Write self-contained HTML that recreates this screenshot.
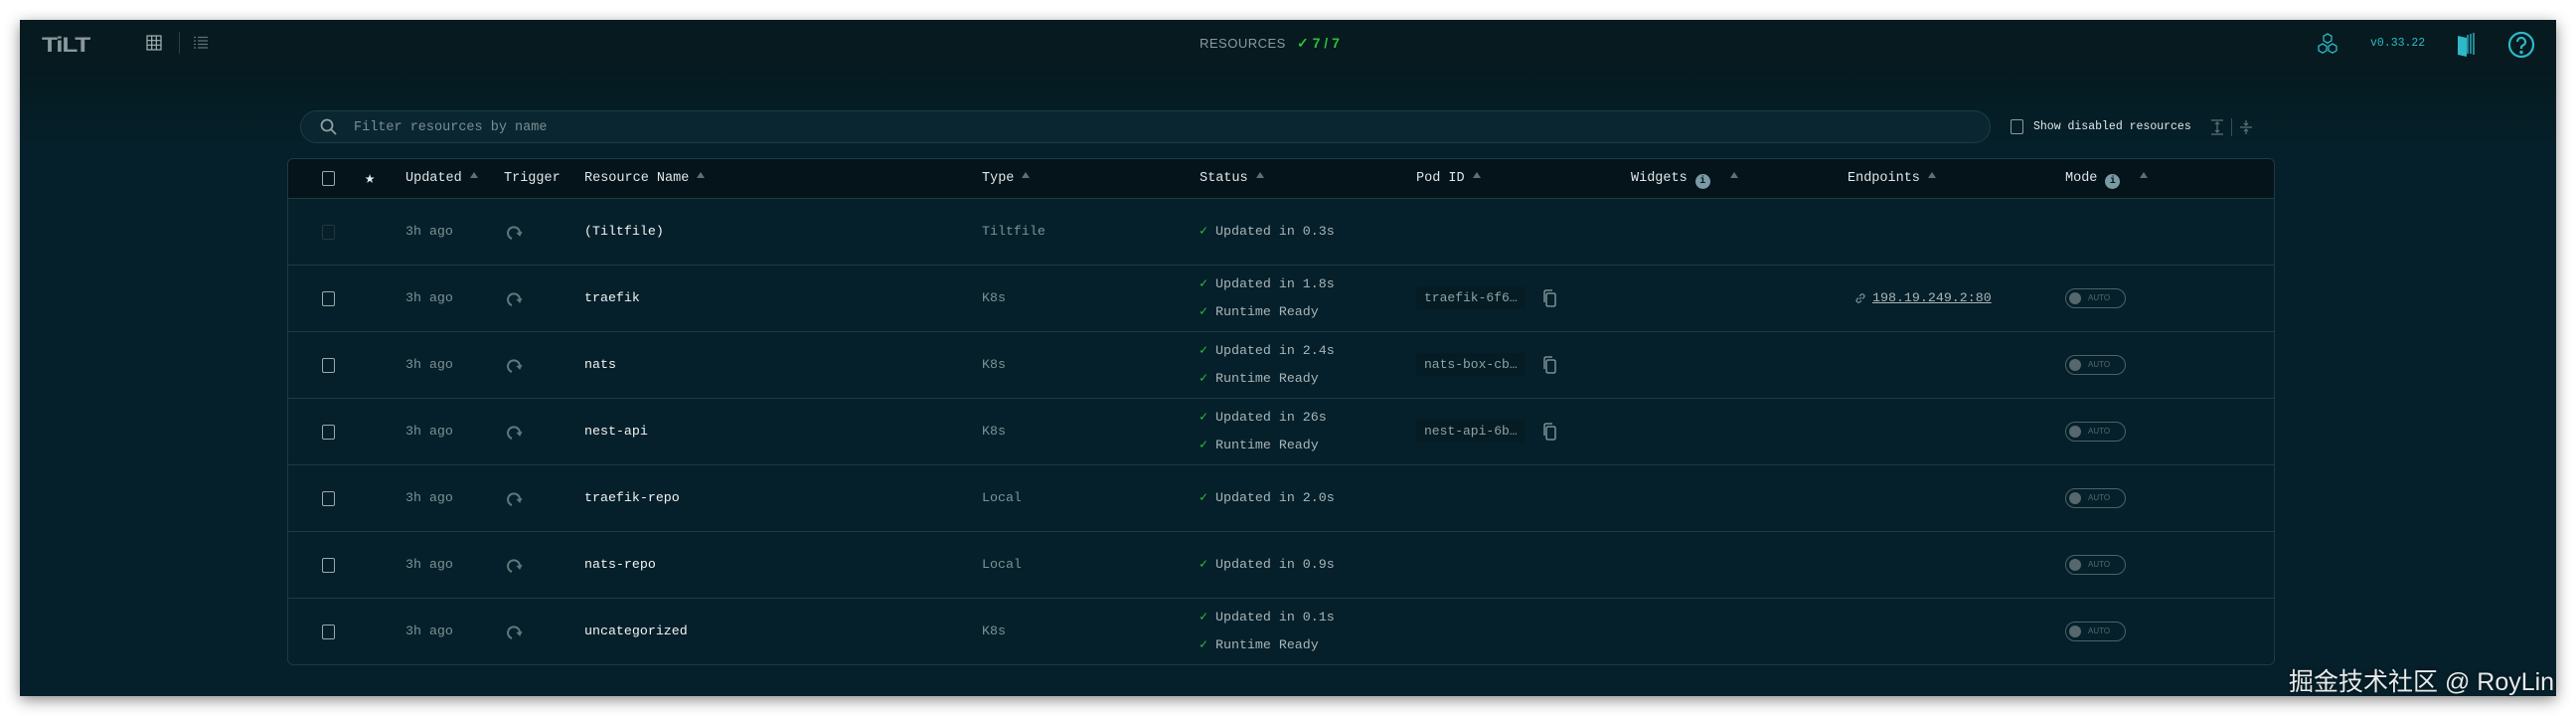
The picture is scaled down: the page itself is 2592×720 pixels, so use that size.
<!DOCTYPE html>
<html><head><meta charset="utf-8">
<style>
*{box-sizing:border-box;margin:0;padding:0}
html,body{width:2592px;height:720px;background:#fff;overflow:hidden;font-family:"Liberation Mono",monospace}
.win{position:absolute;left:20px;top:20px;width:2552px;height:680px;background:#05202a;box-shadow:0 4px 14px rgba(0,0,0,.45);overflow:hidden}
.top{position:absolute;left:0;top:0;width:100%;height:50px;background:#061a1f}
.glow{position:absolute;left:0;top:50px;width:100%;height:80px;background:linear-gradient(#051a20,#05202a)}
.a{position:absolute;white-space:nowrap}
.search{left:282px;top:91px;width:1701px;height:33px;border:1px solid #1e3d47;border-radius:17px;background:#0a2630}
.tbl{left:269px;top:139px;width:2000px;height:510px;border:1px solid #1f3a42;border-radius:6px;overflow:hidden;background:#05202a}
.hdr{position:absolute;left:0;top:0;width:100%;height:40px;background:#04141a;border-bottom:1px solid #1f3a42}
.row{position:absolute;left:0;width:100%;height:67px;border-bottom:1px solid #1f3a42}
.h{font-size:13.5px;color:#e0e6e8;top:12px;line-height:16px}
.tri{display:inline-block;width:0;height:0;border-left:4px solid transparent;border-right:4px solid transparent;border-bottom:6px solid #5c7076;margin-left:8px;vertical-align:3px}
.info{display:inline-block;width:15px;height:15px;border-radius:50%;background:#7a9aa6;color:#04141a;font-size:10px;text-align:center;line-height:15px;font-weight:bold;margin-left:8px;vertical-align:-2px}
.cb{width:13px;height:15px;border:1.5px solid #9aa8ac;border-radius:2px}
.t{font-size:13.3px}
.g{color:#7d9196}.w{color:#f2f4f5}.s{color:#a9b5b8}
.ck{color:#2fbf3c;margin-right:8px}
.pod{background:#061c24;padding:4px 8px;color:#8fa2a6;font-size:13px}
.tog{width:61px;height:20px;border:1.5px solid #4d6268;border-radius:10px}
.tog i{position:absolute;left:3px;top:2.5px;width:12px;height:12px;border-radius:50%;background:#56686d}
.tog b{position:absolute;left:22px;top:4px;font-size:8px;color:#56686d;font-weight:normal;font-family:"Liberation Sans",sans-serif}
</style></head><body>
<div class="win">
<div class="top"></div><div class="glow"></div>
<div class="a" style="left:22px;top:14px;font-family:'Liberation Sans',sans-serif;font-weight:900;font-size:21px;color:#8a989c;letter-spacing:-1px;transform:scaleX(1.25);transform-origin:left">TiLT</div>
<svg class="a" style="left:127px;top:15px" width="16" height="16" viewBox="0 0 16 16" fill="none" stroke="#a7b4b8" stroke-width="1.2"><rect x="1" y="1" width="14" height="14"/><path d="M5.7 1v14M10.3 1v14M1 5.7h14M1 10.3h14"/></svg>
<div class="a" style="left:160px;top:12px;width:1px;height:22px;background:#2b4047"></div>
<svg class="a" style="left:175px;top:16px" width="14" height="14" viewBox="0 0 14 14" stroke="#5e7379" stroke-width="1.2"><path d="M0 1.5h2M4 1.5h10M0 5h2M4 5h10M0 8.5h2M4 8.5h10M0 12h2M4 12h10"/></svg>
<div class="a" style="left:1187px;top:16px;font-family:'Liberation Sans',sans-serif;font-size:13px;color:#8d9ba0;letter-spacing:.5px">RESOURCES</div>
<div class="a" style="left:1285px;top:15px;font-family:'Liberation Sans',sans-serif;font-size:14px;color:#2fbf3c;font-weight:bold">✓ 7 / 7</div>
<svg class="a" style="left:2311px;top:13px" width="22" height="24" viewBox="0 0 22 24" fill="none" stroke="#2fb8c8" stroke-width="1.3"><path d="M11 1l4 2.3v4.6L11 10.2 7 7.9V3.3z"/><path d="M6 11l4 2.3v4.6L6 20.2 2 17.9v-4.6z"/><path d="M16 11l4 2.3v4.6L16 20.2 12 17.9v-4.6z"/></svg>
<div class="a" style="left:2365px;top:17px;font-size:11.5px;color:#2fb8c8">v0.33.22</div>
<svg class="a" style="left:2451px;top:12px" width="20" height="26" viewBox="0 0 20 26"><path d="M2 4l9 2v19l-9-2z" fill="#2fb8c8"/><path d="M12 3v19M15 2v20M18 1v22" stroke="#2fb8c8" stroke-width="1.4" fill="none"/></svg>
<svg class="a" style="left:2503px;top:11px" width="28" height="28" viewBox="0 0 28 28" fill="none" stroke="#2fb8c8" stroke-width="2.2"><circle cx="14" cy="14" r="12"/><path d="M10 11a4 4 0 1 1 5.5 3.7c-1 .5-1.5 1.3-1.5 2.3v1"/><circle cx="14" cy="21.5" r=".6" fill="#2fb8c8"/></svg>

<div class="a search"></div>
<svg class="a" style="left:302px;top:99px" width="18" height="18" viewBox="0 0 18 18" fill="none" stroke="#8fa0a5" stroke-width="1.8"><circle cx="7" cy="7" r="5.5"/><path d="M11 11l5 5"/></svg>
<div class="a" style="left:336px;top:101px;font-size:13.5px;color:#7a8e93">Filter resources by name</div>
<div class="a cb" style="left:2003px;top:100px;border-color:#8c9a9e"></div>
<div class="a" style="left:2026px;top:101px;font-size:11.5px;color:#e2e8ea">Show disabled resources</div>
<svg class="a" style="left:2204px;top:100px" width="14" height="16" viewBox="0 0 14 16" stroke="#5d7278" stroke-width="1.2" fill="none"><path d="M1 1h12M1 15h12M7 3v10M5 5l2-2 2 2M5 11l2 2 2-2"/></svg>
<div class="a" style="left:2225px;top:99px;width:1px;height:18px;background:#3a5057"></div>
<svg class="a" style="left:2233px;top:100px" width="14" height="16" viewBox="0 0 14 16" stroke="#5d7278" stroke-width="1.2" fill="none"><path d="M1 8h12M7 1v5M5 4l2 2 2-2M7 15v-5M5 12l2-2 2 2"/></svg>

<div class="a tbl">
<div class="hdr">
<div class="a cb" style="left:34px;top:12px"></div>
<div class="a" style="left:77px;top:9px;color:#e8eef0;font-size:17px">★</div>
<div class="a h" style="left:118px">Updated<span class="tri"></span></div>
<div class="a h" style="left:217px">Trigger</div>
<div class="a h" style="left:298px">Resource Name<span class="tri"></span></div>
<div class="a h" style="left:698px">Type<span class="tri"></span></div>
<div class="a h" style="left:917px">Status<span class="tri"></span></div>
<div class="a h" style="left:1135px">Pod ID<span class="tri"></span></div>
<div class="a h" style="left:1351px">Widgets<span class="info">i</span><span class="tri" style="margin-left:20px"></span></div>
<div class="a h" style="left:1569px">Endpoints<span class="tri"></span></div>
<div class="a h" style="left:1788px">Mode<span class="info">i</span><span class="tri" style="margin-left:20px"></span></div>
</div>
</div>
</div>
<script>
var rows=[
["(Tiltfile)","Tiltfile",["Updated in 0.3s"],null,null,false,true],
["traefik","K8s",["Updated in 1.8s","Runtime Ready"],"traefik-6f6…","198.19.249.2:80",true],
["nats","K8s",["Updated in 2.4s","Runtime Ready"],"nats-box-cb…",null,true],
["nest-api","K8s",["Updated in 26s","Runtime Ready"],"nest-api-6b…",null,true],
["traefik-repo","Local",["Updated in 2.0s"],null,null,true],
["nats-repo","Local",["Updated in 0.9s"],null,null,true],
["uncategorized","K8s",["Updated in 0.1s","Runtime Ready"],null,null,true]];
var t=document.querySelector('.tbl'),h='';
rows.forEach(function(r,i){
var top=40+67*i;h+='<div class="row" style="top:'+top+'px;'+(i==6?'border-bottom:none':'')+'">';
h+='<div class="a cb" style="left:34px;top:26px;'+(r[6]?'border-color:#24383e':'')+'"></div>';
h+='<div class="a t g" style="left:118px;top:25px">3h ago</div>';
h+='<svg class="a" style="left:220px;top:26px" width="16" height="16" viewBox="0 0 16 16" fill="none" stroke="#62767c" stroke-width="2"><path d="M5 14A6 6 0 1 1 13 9"/><path d="M10 8l3 3 2-4" fill="#62767c" stroke-width="1"/></svg>';
h+='<div class="a t w" style="left:298px;top:25px">'+r[0]+'</div>';
h+='<div class="a t g" style="left:698px;top:25px">'+r[1]+'</div>';
if(r[2].length==1)h+='<div class="a t s" style="left:917px;top:25px"><span class="ck">✓</span>'+r[2][0]+'</div>';
else{h+='<div class="a t s" style="left:917px;top:11px"><span class="ck">✓</span>'+r[2][0]+'</div><div class="a t s" style="left:917px;top:39px"><span class="ck">✓</span>'+r[2][1]+'</div>';}
if(r[3]){h+='<div class="a pod" style="left:1135px;top:21px">'+r[3]+'</div><svg class="a" style="left:1262px;top:24px" width="14" height="18" viewBox="0 0 14 18" fill="none" stroke="#8fa2a6" stroke-width="1.3"><rect x="4" y="4" width="9" height="13" rx="1.5"/><path d="M2 13V2.5A1.5 1.5 0 0 1 3.5 1H10"/></svg>';}
if(r[4]){h+='<svg class="a" style="left:1576px;top:27px" width="12" height="12" viewBox="0 0 12 12" fill="none" stroke="#7d9196" stroke-width="1.2"><path d="M5 7l2-2M4 5.5L2.5 7a2 2 0 0 0 2.8 2.8L7 8.3M8 6.5L9.5 5A2 2 0 0 0 6.7 2.2L5 3.8"/></svg><div class="a t" style="left:1594px;top:25px;color:#a9b5b8;text-decoration:underline">'+r[4]+'</div>';}
if(r[5])h+='<div class="a tog" style="left:1788px;top:23px"><i></i><b>AUTO</b></div>';
h+='</div>';});
t.insertAdjacentHTML('beforeend',h);
</script>
<div class="a" style="left:2303px;top:666px;font-family:'Liberation Sans','Noto Sans CJK SC',sans-serif;font-size:25px;color:#e6eaec;text-shadow:0 0 3px rgba(0,0,0,.6)">掘金技术社区 @ RoyLin</div>
</body></html>
